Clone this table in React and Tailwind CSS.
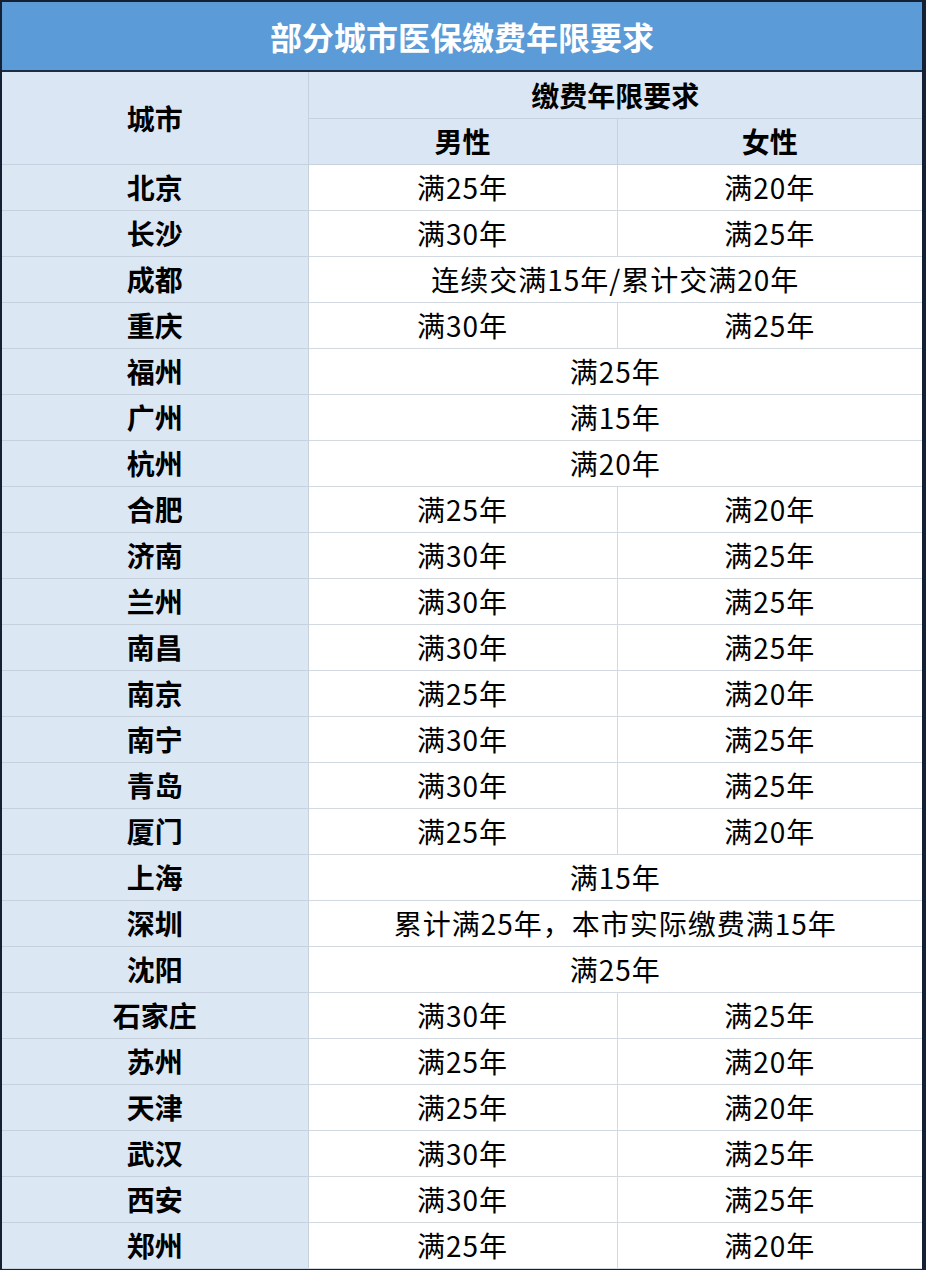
import React from 'react';

const rows = [
  ['北京', '满25年', '满20年'],
  ['长沙', '满30年', '满25年'],
  ['成都', '连续交满15年/累计交满20年'],
  ['重庆', '满30年', '满25年'],
  ['福州', '满25年'],
  ['广州', '满15年'],
  ['杭州', '满20年'],
  ['合肥', '满25年', '满20年'],
  ['济南', '满30年', '满25年'],
  ['兰州', '满30年', '满25年'],
  ['南昌', '满30年', '满25年'],
  ['南京', '满25年', '满20年'],
  ['南宁', '满30年', '满25年'],
  ['青岛', '满30年', '满25年'],
  ['厦门', '满25年', '满20年'],
  ['上海', '满15年'],
  ['深圳', '累计满25年，本市实际缴费满15年'],
  ['沈阳', '满25年'],
  ['石家庄', '满30年', '满25年'],
  ['苏州', '满25年', '满20年'],
  ['天津', '满25年', '满20年'],
  ['武汉', '满30年', '满25年'],
  ['西安', '满30年', '满25年'],
  ['郑州', '满25年', '满20年'],
];

const font = { fontFamily: '"Microsoft YaHei", "Noto Sans CJK SC", sans-serif' };

export default function App() {
  return (
    <div className="w-[926px] h-[1270px] bg-[#142033] pt-[2px] pl-[2px] pr-[4px] pb-[2px] overflow-hidden" style={font}>
      <div className="flex h-[70px] items-center justify-center bg-[#5b9bd7] border-b-2 border-[#1d2d44]">
        <h1 className="text-[32px] font-bold text-white leading-none">部分城市医保缴费年限要求</h1>
      </div>
      <table className="w-full table-fixed border-collapse text-black">
        <colgroup>
          <col className="w-[306px]" />
          <col className="w-[309px]" />
          <col />
        </colgroup>
        <thead>
          <tr className="h-[46px]">
            <th rowSpan={2} className="bg-[#dae6f4] border border-[#c7d1dd] border-t-0 border-l-0 text-[28px] font-bold leading-none">城市</th>
            <th colSpan={2} className="bg-[#dae6f4] border border-[#c7d1dd] border-t-0 border-r-0 text-[28px] font-bold leading-none">缴费年限要求</th>
          </tr>
          <tr className="h-[46px]">
            <th className="bg-[#dae6f4] border border-[#c7d1dd] text-[28px] font-bold leading-none">男性</th>
            <th className="bg-[#dae6f4] border border-[#c7d1dd] border-r-0 text-[28px] font-bold leading-none">女性</th>
          </tr>
        </thead>
        <tbody>
          {rows.map(([city, a, b]) => (
            <tr key={city} className="h-[46px]">
              <td className="bg-[#dce7f4] border border-[#c7d1dd] border-l-0 text-center text-[28px] font-bold leading-none">{city}</td>
              {b ? (
                <>
                  <td className="bg-white border border-[#d3d9e1] text-center text-[28px] leading-none tracking-[1px]">{a}</td>
                  <td className="bg-white border border-[#d3d9e1] border-r-0 text-center text-[28px] leading-none tracking-[1px]">{b}</td>
                </>
              ) : (
                <td colSpan={2} className="bg-white border border-[#d3d9e1] border-r-0 text-center text-[28px] leading-none tracking-[1px]">{a}</td>
              )}
            </tr>
          ))}
        </tbody>
      </table>
    </div>
  );
}
